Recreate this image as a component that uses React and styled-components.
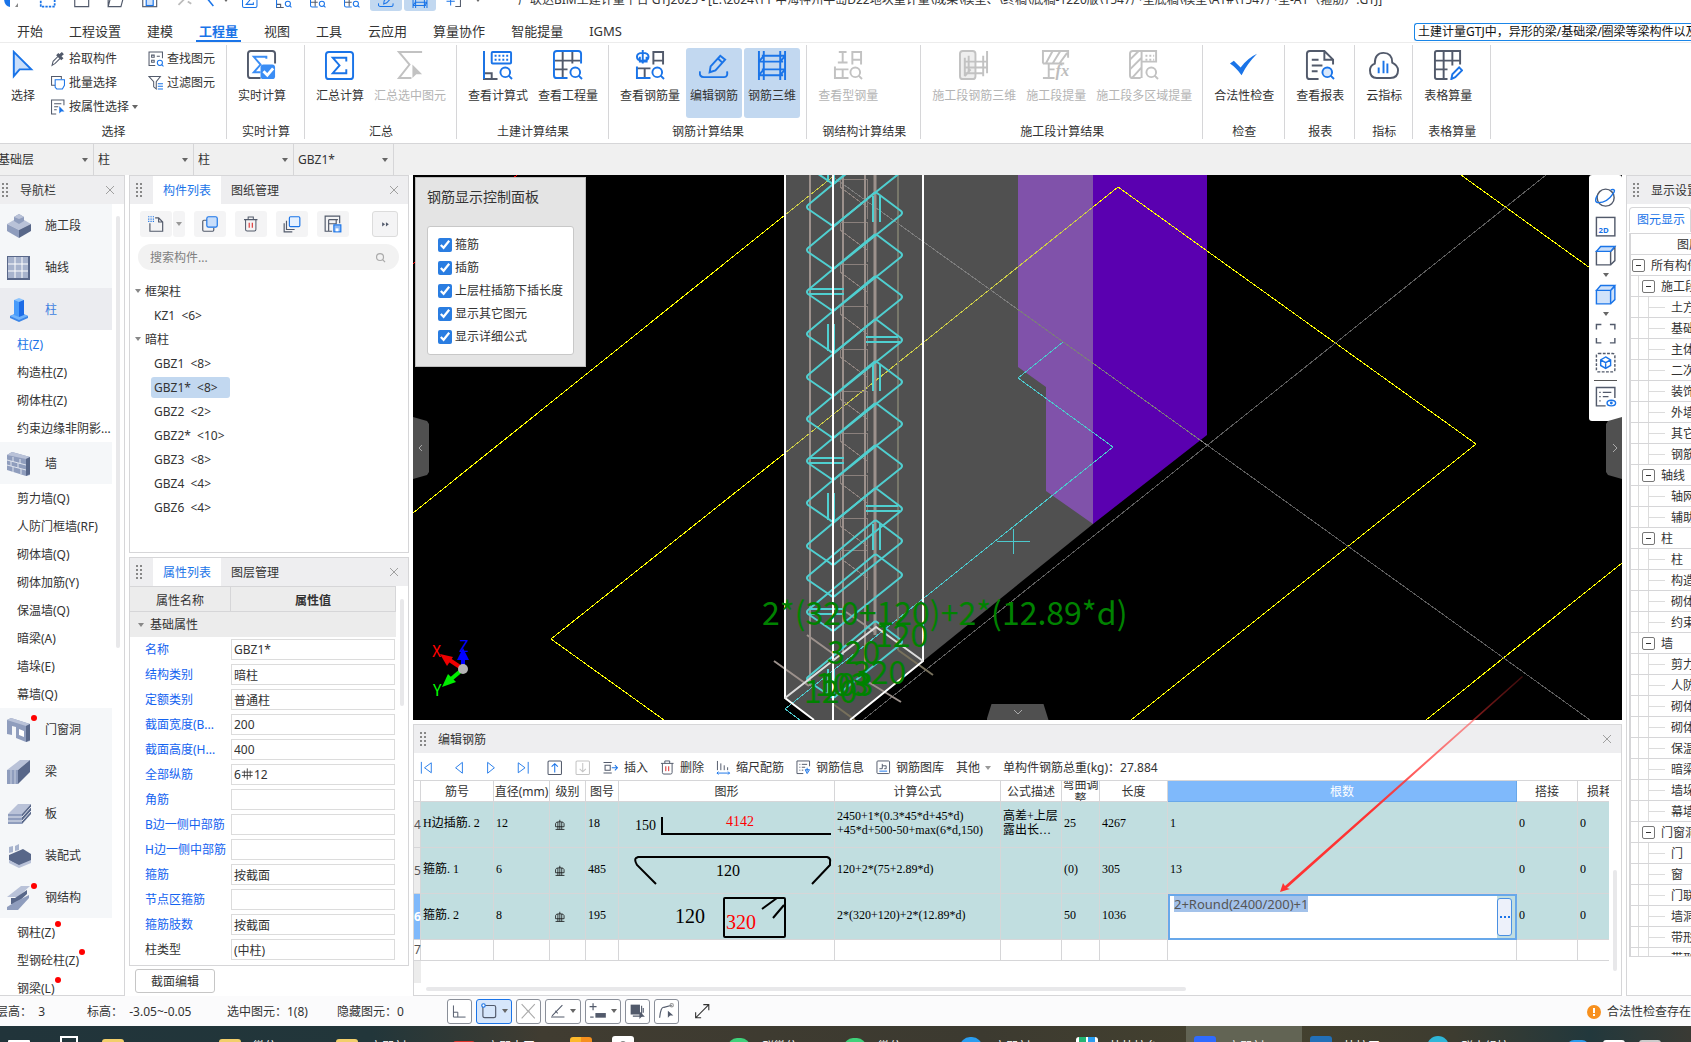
import React from "react";
import styled, { createGlobalStyle, css } from "styled-components";

const BLUE = "#1a74e8";
const DARK = "#525a6b";
const LINE = "#d6d6d8";

// Styles
const GlobalStyle = createGlobalStyle`
  * {
    box-sizing: border-box;
  }

  body {
    margin: 0;
    overflow: hidden;
    background: #fff;
  }

  body, button, input, select, table {
    font-family: "Noto Sans", "Noto Sans CJK SC", sans-serif;
    font-size: 12px;
    line-height: 16px;
    color: #333;
  }

  button {
    border: 0;
    padding: 0;
    background: none;
  }

  svg {
    display: block;
    flex: none;
  }
`;

const Window = styled.div`
  display: flex;
  flex-direction: column;
  height: 100vh;
  overflow: hidden;
`;

const TitleBar = styled.header`
  display: flex;
  align-items: flex-end;
  height: 20px;
  overflow: hidden;

  .inner {
    display: flex;
    align-items: center;
    height: 40px;
    white-space: nowrap;
  }

  .title {
    margin: 0 0 0 32px;
    font-size: 12px;
    font-weight: 400;
  }
`;

const QuickButton = styled.button`
  display: flex;
  align-items: center;
  justify-content: center;
  width: ${(p) => p.$w || 32}px;
  height: 22px;
  margin-right: 2px;
  border-radius: 3px;
  background: ${(p) => (p.$on ? "#c2d8f0" : "none")};
`;

const TabBar = styled.nav`
  display: flex;
  height: 23px;
  padding-left: 4px;
  border-bottom: 1px solid #ececec;

  a {
    position: relative;
    padding: 1px 13px 0;
    font-size: 13px;
    line-height: 20px;
    color: #333;
    text-decoration: none;
    white-space: nowrap;
  }

  a.active {
    color: ${BLUE};
    font-weight: 700;
  }

  a.active::after {
    content: "";
    position: absolute;
    left: 10px;
    right: 10px;
    bottom: 0;
    height: 2px;
    background: ${BLUE};
  }
`;

const Notice = styled.div`
  width: 277px;
  height: 18px;
  margin: 3px 0 0 auto;
  padding-left: 3px;
  overflow: hidden;
  border: 1px solid #1a86e8;
  border-right: 0;
  border-radius: 3px 0 0 3px;
  color: #111;
  white-space: nowrap;
`;

const Ribbon = styled.div`
  display: flex;
  height: 101px;
  padding-top: 2px;
  border-bottom: 1px solid ${LINE};
`;

const Group = styled.section`
  display: flex;
  flex-direction: column;
  height: 94px;
  border-right: 1px solid ${LINE};

  .buttons {
    display: flex;
    gap: 2px;
    height: 77px;
    padding: 3px 6px 4px ${(p) => (p.$first ? 4 : 7)}px;
  }

  h2 {
    margin: 2px 0 0;
    padding: 0 14px 0 15px;
    font-size: 12px;
    line-height: 15px;
    font-weight: 400;
    text-align: center;
    white-space: nowrap;
  }
`;

const BigButton = styled.button`
  display: flex;
  flex-direction: column;
  align-items: center;
  gap: 8px;
  padding: 2px 4px;
  border-radius: 3px;
  white-space: nowrap;
  color: ${(p) => (p.disabled ? "#b4b4b4" : "#333")};
  background: ${(p) => (p.$on ? "#c2d8f0" : "none")};
`;

const SmallColumn = styled.div`
  display: flex;
  flex-direction: column;
  gap: 8px;
  width: ${(p) => p.$w}px;
  padding: 3px 0 0 6px;

  button {
    display: flex;
    align-items: center;
    gap: 3px;
    height: 16px;
    white-space: nowrap;
  }
`;

const SelectorBar = styled.div`
  display: flex;
  height: 31px;
  background: #f0f0f0;

  .first {
    margin-left: -6px;
  }
`;

const Picker = styled.label`
  display: flex;
  align-items: center;
  width: 100px;
  padding: 0 5px 0 4px;
  border-right: 1px solid ${LINE};

  select {
    flex: 1;
    min-width: 0;
    padding: 0;
    border: 0;
    background: none;
    appearance: none;
  }
`;

const Body = styled.main`
  display: flex;
  flex: 1;
  min-height: 0;
  gap: 4px;
`;

const PanelHead = styled.div`
  display: flex;
  align-items: center;
  flex: none;
  height: 28px;
  padding: 0 ${(p) => p.$right || 9}px 0 ${(p) => p.$left || 6}px;
  background: #eeeef0;
  white-space: nowrap;

  h3 {
    margin: 0 0 0 12px;
    padding-top: 2px;
    font-size: 12px;
    font-weight: 400;
  }

  .tabs {
    display: flex;
    margin-left: 11px;
  }

  .close {
    margin-left: auto;
  }
`;

const Tab = styled.button`
  height: 28px;
  padding: 2px 10px 0;
  white-space: nowrap;
  color: ${(p) => (p.$on ? BLUE : "#333")};
  background: ${(p) => (p.$on ? "#fff" : "none")};
`;

const NavPanel = styled.aside`
  display: flex;
  flex-direction: column;
  flex: none;
  width: 125px;
  border: solid ${LINE};
  border-width: 1px 1px 1px 0;

  .scroll {
    display: flex;
    flex: 1;
    min-height: 0;
    overflow: hidden;
  }

  .list {
    width: 112px;
  }
`;

const ScrollBar = styled.div`
  flex: none;
  width: 4px;
  height: ${(p) => p.$size}px;
  margin: ${(p) => p.$top}px 4px 0;
  border-radius: 2px;
  background: #e8e8ea;
`;

const NavGroup = styled.a`
  display: flex;
  align-items: center;
  gap: 14px;
  height: 42px;
  padding: 2px 0 0 7px;
  text-decoration: none;
  color: ${(p) => (p.$on ? "#3f7fe0" : "#333")};
  background: ${(p) => (p.$on ? "#ebecf0" : "#f5f7f9")};
`;

const NavItem = styled.a`
  display: block;
  height: 28px;
  padding-left: 17px;
  line-height: 30px;
  text-decoration: none;
  white-space: nowrap;
  color: ${(p) => (p.$on ? BLUE : "#333")};
`;

const Marked = styled.span`
  position: relative;

  ${(p) =>
    p.$dot &&
    css`
      &::after {
        content: "";
        position: absolute;
        top: -3px;
        right: -6px;
        width: 6px;
        height: 6px;
        border-radius: 50%;
        background: #f00;
      }
    `}
`;

const SideColumn = styled.div`
  display: flex;
  flex-direction: column;
  flex: none;
  width: 280px;
`;

const Panel = styled.section`
  display: flex;
  flex-direction: column;
  overflow: hidden;
  border: 1px solid ${LINE};
`;

const ComponentPanel = styled(Panel)`
  height: 378px;
  margin-bottom: 4px;
`;

const ListTools = styled.div`
  display: flex;
  gap: 9px;
  padding: 7px 10px;

  button {
    display: flex;
    align-items: center;
    justify-content: center;
    width: 32px;
    height: 26px;
    border-radius: 3px;
    background: #f4f4f5;
  }

  .split {
    display: flex;
    gap: 1px;
  }

  .caret {
    width: 12px;
  }

  .more {
    width: 26px;
    margin-left: auto;
    border: 1px solid #dcdcdc;
  }
`;

const SearchBox = styled.label`
  display: flex;
  align-items: center;
  height: 26px;
  margin: 0 9px 0 8px;
  padding: 1px 12px 0;
  border-radius: 13px;
  background: #f2f2f2;

  input {
    flex: 1;
    min-width: 0;
    padding: 0;
    border: 0;
    background: none;
  }

  input::placeholder {
    color: #808080;
  }
`;

const Tree = styled.ul`
  margin: 9px 0 0;
  padding: 0;
  list-style: none;

  li {
    display: flex;
    align-items: center;
    gap: 4px;
    height: 24px;
    padding-left: 5px;
  }

  li.leaf {
    padding-left: 21px;
  }

  span {
    padding: 3px 3px 2px;
    border-radius: 3px;
    white-space: pre;
  }

  .group {
    padding-left: 0;
  }

  .selected {
    width: 79px;
    background: #c2d8f0;
  }
`;

const PropertyPanel = styled(Panel)`
  flex: 1;
  min-height: 0;

  .scroll {
    display: flex;
    flex: 1;
    min-height: 0;
  }
`;

const PropertyTable = styled.table`
  flex: none;
  width: 266px;
  border-spacing: 0;
  table-layout: fixed;
  height: max-content;

  col.name {
    width: 101px;
  }

  th {
    height: 26px;
    padding: 4px 0 0;
    border: solid ${LINE};
    border-width: 1px 1px 1px 0;
    background: #ececec;
  }

  th.name {
    font-weight: 400;
  }

  td {
    height: 25px;
    padding: 0 1px 0 0;
    white-space: nowrap;
  }

  td.section {
    background: #ececec;
  }

  td.section div {
    display: flex;
    align-items: center;
    gap: 6px;
    padding-left: 8px;
  }

  input {
    display: block;
    width: 100%;
    height: 21px;
    padding: 0 2px;
    border: 1px solid #dcdcdc;
  }
`;

const PropName = styled.td`
  color: ${(p) => (p.$plain ? "#333" : "#1463f0")};

  label {
    padding-left: 15px;
  }
`;

const BarField = styled.div`
  display: flex;
  align-items: center;
  height: 21px;
  padding: 0 2px;
  border: 1px solid #dcdcdc;
`;

const SectionButton = styled.button`
  align-self: flex-start;
  width: 80px;
  height: 24px;
  margin: 3px 6px;
  padding-top: 1px;
  border: 1px solid #c6c6c6;
  border-radius: 3px;
  background: #fff;
`;

const Center = styled.div`
  position: relative;
  display: flex;
  flex-direction: column;
  flex: 1;
  min-width: 0;
`;

const Viewport = styled.div`
  position: relative;
  flex: 1;
  min-height: 0;
  margin-bottom: 4px;
  background: #000;
  overflow: hidden;

  > svg {
    width: 100%;
    height: 100%;
  }
`;

const EdgeHandle = styled.button`
  position: absolute;
  display: flex;
  align-items: center;
  justify-content: center;
  background: #505050;

  ${(p) =>
    p.$side === "bottom"
      ? css`
          left: calc(50% - 31px);
          bottom: 0;
          width: 62px;
          height: 16px;
          clip-path: polygon(5px 0, 57px 0, 62px 100%, 0 100%);
        `
      : css`
          ${p.$side}: 0;
          top: 242px;
          width: 16px;
          height: 62px;
          clip-path: ${p.$side === "left"
            ? "polygon(0 0, 14px 4px, 16px 7px, 16px 55px, 14px 58px, 0 62px)"
            : "polygon(16px 0, 2px 4px, 0 7px, 0 55px, 2px 58px, 16px 62px)"};
        `}
`;

const DisplayPanel = styled.div`
  position: absolute;
  top: 2px;
  left: 2px;
  width: 171px;
  padding: 11px;
  border: 1px solid #bdbdbd;
  background: #e4e4e4;

  h3 {
    margin: 0 0 21px;
    font-size: 14px;
    line-height: 16px;
    font-weight: 400;
  }

  div {
    display: flex;
    flex-direction: column;
    gap: 7px;
    height: 129px;
    padding: 10px;
    border: 1px solid #c8c8c8;
    border-radius: 3px;
    background: #fff;
  }

  label {
    display: flex;
    align-items: center;
    gap: 3px;
    white-space: nowrap;
  }

  input {
    width: 14px;
    height: 14px;
    margin: 0;
    accent-color: #2a7de1;
  }
`;

const ViewTools = styled.div`
  position: absolute;
  top: 0;
  right: 0;
  display: flex;
  flex-direction: column;
  align-items: center;
  width: 33px;
  height: 246px;
  padding-top: 12px;
  border-radius: 3px;
  background: #fff;

  button {
    height: 22px;
    margin-bottom: 7px;
  }

  .caret {
    height: 6px;
    margin: -2px 0 6px;
  }

  hr {
    width: 23px;
    margin: -1px 0 5px;
    border: 0;
    border-top: 1px solid #555;
  }
`;

const EditPanel = styled(Panel)`
  flex: none;
  height: 272px;

  .grid {
    display: flex;
  }

  .frame {
    flex: 1;
    min-width: 0;
    overflow: hidden;
  }

  .gutter {
    width: 7px;
    height: 22px;
    background: #ececec;
  }
`;

const EditTools = styled.div`
  display: flex;
  align-items: center;
  height: 28px;
  padding: 2px 0 0 5px;
  border-bottom: 1px solid ${LINE};
  white-space: nowrap;

  button {
    display: flex;
    align-items: center;
    gap: 5px;
    margin-right: 12px;
  }

  .step {
    width: 16px;
    justify-content: center;
    margin-right: 16px;
  }

  .move {
    margin-right: 12px;
  }
`;

const RebarTable = styled.table`
  width: 100%;
  border-spacing: 0;
  table-layout: fixed;

  th {
    height: 21px;
    padding: 0;
    border: solid ${LINE};
    border-width: 0 1px 1px 0;
    font-weight: 400;
    white-space: nowrap;
  }

  th:last-child {
    border-right: 0;
  }

  th div {
    display: flex;
    align-items: center;
    justify-content: center;
    height: 20px;
    padding-top: 1px;
    overflow: hidden;
  }

  th:last-child div {
    justify-content: flex-start;
    padding-left: 9px;
  }

  th .wrapped {
    line-height: 14px;
    white-space: normal;
  }

  th.current {
    border-color: #68a8ea;
    background: #7fb9fb;
    color: #fff;
  }

  td {
    height: 46px;
    padding: 0 2px 4px;
    border: solid ${LINE};
    border-width: 0 1px 1px 0;
    background: #c1dee0;
    font-family: "Liberation Serif", "Noto Sans CJK SC", serif;
    line-height: 14px;
    color: #000;
    white-space: pre;
  }

  .grade {
    padding: 0 0 0 4px;
  }

  .figure {
    padding: 0;
  }

  .editing {
    padding: 0;
    border: 0;
  }

  td:last-child {
    border-right: 0;
  }

  tr.empty td {
    height: 21px;
    background: #fff;
  }
`;

const RowHead = styled.td`
  && {
    padding: 0;
    font-family: "Noto Sans", sans-serif;
    text-align: center;
    color: ${(p) => (p.$on ? "#fff" : "#555")};
    font-weight: ${(p) => (p.$on ? 700 : 400)};
    background: ${(p) => (p.$on ? "#7fb9fb" : "#ececec")};
  }
`;

const Editor = styled.div`
  display: flex;
  align-items: flex-start;
  height: 46px;
  border: 2px solid #68a8ea;
  background: #fff;

  input {
    field-sizing: content;
    height: 16px;
    margin-left: 4px;
    padding: 0;
    border: 0;
    font-size: 13px;
    line-height: 15px;
    background: #a3c2ea;
    color: #555;
  }

  span {
    margin-left: auto;
    padding: 2px 3px 2px 0;
    background: #c1dee0;
  }

  button {
    display: flex;
    align-items: center;
    justify-content: center;
    width: 15px;
    height: 38px;
    border: 1px solid #4a90e2;
    border-radius: 3px;
    background: #edf1fa;
  }
`;

const HScroll = styled.div`
  width: 63%;
  height: 4px;
  margin: 4px 12px;
  border-radius: 2px;
  background: #e8e8ea;
`;

const Arrow = styled.svg`
  position: absolute;
  inset: 0;
  width: 100%;
  height: 100%;
  pointer-events: none;
`;

const LayerPanel = styled.aside`
  flex: none;
  width: 65px;
  overflow: hidden;
  border: solid ${LINE};
  border-width: 1px 0 1px 1px;
  white-space: nowrap;

  .tab {
    display: block;
    width: 62px;
    height: 25px;
    margin: 3px 0 1px 2px;
    padding-left: 7px;
    border: 1px solid ${LINE};
    border-bottom: 0;
    border-radius: 4px 4px 0 0;
    text-align: left;
    color: ${BLUE};
  }

  .tree {
    height: 724px;
    margin-left: 2px;
    overflow: hidden;
    border: solid ${LINE};
    border-width: 1px 0 1px 2px;
  }

  .title {
    height: 21px;
    padding-left: 46px;
    line-height: 21px;
    border-bottom: 1px solid ${LINE};
  }
`;

const LayerRow = styled.div`
  display: flex;
  align-items: stretch;
  height: 21px;
  border-bottom: 1px solid ${LINE};
  line-height: 21px;

  .rail {
    flex: none;
    display: ${(p) => (p.$level === 0 ? "none" : "block")};
    width: ${(p) => (p.$level === 2 ? 18 : 8)}px;
    margin-right: ${(p) => (p.$level === 1 ? 3 : 0)}px;
    border-right: 1px solid #dcdcdc;
    background: ${(p) =>
      p.$level === 2
        ? "linear-gradient(90deg, transparent 7px, #dcdcdc 7px, #dcdcdc 8px, transparent 8px)"
        : "none"};
  }

  .twig {
    flex: none;
    align-self: center;
    width: 16px;
    height: 1px;
    margin-right: 6px;
    background: #dcdcdc;
  }

  button {
    flex: none;
    align-self: center;
    width: 13px;
    height: 13px;
    margin: 0 6px 0 ${(p) => (p.$level === 0 ? 1 : 0)}px;
    border: 1px solid #777;
    border-radius: 2px;
    background: #fff;
  }

  button::before {
    content: "";
    display: block;
    width: 5px;
    height: 1px;
    margin: auto;
    background: #333;
  }
`;

const StatusBar = styled.footer`
  display: flex;
  align-items: center;
  flex: none;
  height: 30px;
  overflow: hidden;
  background: #fbfbfc;
  white-space: nowrap;

  .readings {
    display: flex;
    width: 451px;
    margin-left: -4px;
    padding-top: 1px;
  }

  .readings span {
    width: 140px;
  }

  .readings span:first-child {
    width: 91px;
  }

  .readings span:last-child {
    width: 70px;
  }

  .readings span:nth-child(3) {
    width: 110px;
  }

  .expand {
    padding-left: 11px;
  }

  .check {
    display: flex;
    align-items: center;
    gap: 6px;
    width: 104px;
    margin-left: auto;
    padding-top: 1px;
  }
`;

const StatusButton = styled.button`
  display: flex;
  align-items: center;
  justify-content: center;
  gap: 4px;
  width: ${(p) => (p.$wide ? 36 : 25)}px;
  height: 25px;
  margin-right: 4px;
  border: 1px solid ${(p) => (p.$on ? BLUE : "#8a8f99")};
  border-radius: 3px;
  background: ${(p) => (p.$on ? "#d6e6fb" : "#fff")};
`;

const TaskBar = styled.div`
  display: flex;
  flex: none;
  height: 16px;
  overflow: hidden;
  background: linear-gradient(90deg, #21343a 0, #22363a 22%, #403c31 32%, #3c3a30 58%, #45422f 74%, #3d3c30 86%, #22383c 94%, #3a3a34 100%);
`;

const Task = styled.div`
  display: flex;
  align-items: center;
  flex: none;
  gap: 12px;
  width: ${(p) => p.$w}px;
  height: 42px;
  padding-left: 8px;
  color: #fff;
  white-space: nowrap;
  background: ${(p) => (p.$on ? "#626454" : "none")};
`;

const TaskIcon = styled.span`
  flex: none;
  width: 22px;
  height: ${(p) => p.$h || 20}px;
  border-radius: ${(p) => p.$r || 3}px;
  background: ${(p) => p.$c};
`;

// Icons
const s = (stroke, w = 2) => ({ fill: "none", stroke, strokeWidth: w });

const magnifier = (c) => (
  <g {...s(c)}>
    <circle cx="23" cy="23" r="5" />
    <path d="M26.5 26.5L30 30" />
  </g>
);

const icons = {
  cursor: <path d="M6 2V27L12 20H24Z" fill="#c9defa" stroke={BLUE} strokeWidth="2" />,
  realtime: (
    <>
      <path d="M14 29H4Q1 29 1 26V4Q1 1 4 1H26Q29 1 29 4V14" {...s(DARK)} />
      <path d="M20 9V7H7L14 15L7 23H14" {...s("#3a8df5")} />
      <rect x="14" y="15" width="15" height="15" rx="3" fill="#3a8df5" />
      <path d="M17 22L21 26L27 19" {...s("#fff", 3)} />
    </>
  ),
  sum: (
    <>
      <rect x="1" y="2" width="28" height="28" rx="3" {...s(BLUE)} />
      <path d="M22 12V8H8L15 16L8 24H22V20" {...s(BLUE)} />
    </>
  ),
  sumPick: (
    <>
      <path d="M28 2H4L15 15L4 29H17" {...s("#c2c2c2")} />
      <path d="M18 15V29L22 25H28Z" fill="#c2c2c2" />
    </>
  ),
  formula: (
    <>
      <path d="M1 1V30H15M1 24H9V30" {...s(DARK)} />
      <path d="M1 1V30" {...s(BLUE)} />
      <rect x="9" y="2" width="20" height="12" rx="1" {...s(BLUE)} />
      <path d="M12 6H27M12 10H27" {...s(BLUE)} strokeDasharray="2 2" />
      {magnifier(BLUE)}
    </>
  ),
  quantity: (
    <>
      <path d="M29 14V4Q29 1 26 1H4Q1 1 1 4V26Q1 29 4 29H15" {...s(BLUE)} />
      <path d="M2 11H28M2 20H15M10 2V28M20 2V14" {...s(DARK)} />
      {magnifier(BLUE)}
    </>
  ),
  barQuantity: (
    <>
      <path d="M8 0V14M2 7Q2 3 8 3Q14 3 14 7Q14 11 8 11Q2 11 2 7M5 7V12H12V7" {...s(BLUE)} />
      <path d="M19 15V2H29V15M19 11H29M2 19H16M10 19V29" {...s(DARK)} />
      <path d="M2 17V29H16" {...s(BLUE)} />
      {magnifier(BLUE)}
    </>
  ),
  editBar: (
    <>
      <path d="M1 22Q0 28 5 28H26Q30 28 29 22" {...s(BLUE)} />
      <path d="M11 23L12 17L22 6L27 10L17 21Z M20 9L24 13" {...s(BLUE)} />
    </>
  ),
  bar3d: <path d="M2 1V31M7 1V31M24 1V31M29 1V31M5 6H28M2 12H27M5 20H28M2 26H27M2 12L7 6M24 12L29 6M2 26L7 20M24 26L29 20" {...s(BLUE)} />,
  addFrame: (
    <>
      <path d="M12 5H28V28H18" {...s(DARK)} />
      <path d="M9 10V26M1 18H17" {...s(BLUE)} />
    </>
  ),
  steel: (
    <>
      <path d="M6 2H14M10 2V13M5 13H15M20 15V2H29V15M20 10H29M2 17V29H16M2 20H16M10 20V29" {...s("#c2c2c2")} />
      {magnifier("#c2c2c2")}
    </>
  ),
  stage3d: (
    <>
      <rect x="1" y="1" width="16" height="29" rx="3" fill="#eee" stroke="#c2c2c2" strokeWidth="2" />
      <path d="M6 8V27M10 6V24M25 6V27M29 1V24M6 12H29M6 18H29M6 24H26M6 27L12 20" {...s("#c2c2c2")} />
    </>
  ),
  stageSum: (
    <>
      <path d="M2 14V1H28V8M2 14H24M5 14L12 1M12 14L20 1M19 14L27 3M8 14V29M2 29H14M8 20H14" {...s("#c2c2c2")} />
      <text x="15" y="27" fontFamily="Liberation Serif, serif" fontSize="17" fontStyle="italic" fontWeight="700" fill="#bdbdbd">fx</text>
    </>
  ),
  stageArea: (
    <>
      <path d="M12 29H4Q1 29 1 26V4Q1 1 4 1H28V12H14M13 1V29M1 10L10 1M1 20L13 8M3 29L13 18" {...s("#c2c2c2")} />
      <path d="M17 6H26M17 10H26" {...s("#c2c2c2")} strokeDasharray="2 2" />
      {magnifier("#c2c2c2")}
    </>
  ),
  tick: <path d="M1 14L5 11L12 18Q20 8 29 4Q19 14 13 26Q7 18 1 14Z" fill={BLUE} />,
  report: (
    <>
      <path d="M14 30H5Q2 30 2 27V4Q2 1 5 1H20L29 10V15M20 1V10H28M7 10H14M7 16H18M7 22H13" {...s(DARK)} />
      <circle cx="23" cy="23" r="5" fill="#d9e8fc" />
      {magnifier(BLUE)}
    </>
  ),
  cloud: (
    <>
      <path d="M8 29Q1 29 1 21Q1 16 6 14Q6 3 15 3Q24 3 24 13Q30 16 30 21Q30 29 22 29Z" {...s(DARK)} />
      <path d="M10 18V24M15 11V24M19 14V24" {...s(BLUE)} />
    </>
  ),
  sheet: (
    <>
      <path d="M15 30H4Q2 30 2 28V3Q2 1 4 1H28V15M2 11H29M2 20H15M11 1V30M20 1V16" {...s(DARK)} />
      <path d="M19 30L20 25L27 18L30 21L23 28Z" {...s(BLUE)} />
    </>
  ),
  pipette: (
    <>
      <path d="M4 28L6 20L16 10L20 14L10 24Z" {...s(DARK)} />
      <path d="M14 6L24 16M18 10L25 4" {...s(DARK, 6)} />
    </>
  ),
  batch: (
    <>
      <path d="M10 20H3V3H22V8" {...s(DARK)} />
      <path d="M10 9H28V20L24 27H13L10 24Z" {...s(BLUE)} />
    </>
  ),
  byProp: (
    <>
      <path d="M12 29H3V2H27V12M8 9H22M8 15H16M8 21H13" {...s(DARK)} />
      <path d="M18 14V28L22 24H28Z" fill={BLUE} />
    </>
  ),
  find: (
    <>
      <path d="M14 28H2V2H28V14M7 8H12V12H7ZM7 18H12V22H7ZM17 10H23" {...s(DARK)} />
      {magnifier(BLUE)}
    </>
  ),
  filter: (
    <>
      <path d="M2 3H24L16 13V27L11 23V13Z" {...s(DARK)} />
      <path d="M19 17H29M19 22H29M19 27H29" {...s(BLUE)} />
    </>
  ),
  select: <rect x="3" y="3" width="24" height="24" {...s(BLUE, 3)} strokeDasharray="4 2" />,
  page: <path d="M3 2H20L27 9V27H3Z" {...s(DARK)} />,
  open: <path d="M2 27L7 8H29L24 27ZM2 27V3H12" {...s(DARK)} />,
  save: (
    <>
      <rect x="3" y="3" width="24" height="24" {...s(DARK)} />
      <rect x="9" y="10" width="12" height="15" fill="#d0e2fa" stroke={BLUE} strokeWidth="2" />
    </>
  ),
  undo: <path d="M24 6L6 24M22 18L28 22" {...s("#bbb", 3)} />,
  redo: <path d="M8 10L22 27" {...s(BLUE, 3)} />,
  newDoc: (
    <>
      <path d="M14 5H20L27 12V28H5V14M20 5V12H27" {...s(DARK)} />
      <path d="M2 3H12M2 7H12M2 11H12" {...s(BLUE, 2)} strokeDasharray="2 2" />
    </>
  ),
  copy: (
    <>
      <path d="M11 9H5Q3 9 3 11V26Q3 28 5 28H20Q22 28 22 26V22" {...s(DARK)} />
      <rect x="10" y="3" width="18" height="18" rx="3" fill="#c9defa" stroke={BLUE} strokeWidth="2" />
    </>
  ),
  trash: (
    <>
      <path d="M2 7H28M10 7V2H20V7M5 7V26Q5 29 8 29H22Q25 29 25 26V7" {...s(DARK)} />
      <path d="M12 13V23M18 13V23" {...s("#d22")} />
    </>
  ),
  layers: (
    <>
      <path d="M6 10V25H20M2 14V29H16" {...s(DARK)} />
      <rect x="11" y="3" width="18" height="17" rx="2" fill="#e6f1ff" stroke={BLUE} strokeWidth="2" />
    </>
  ),
  saveTo: (
    <>
      <path d="M14 28H2V2H27V14M8 8V28M8 15H22M21 8V15M8 8H24" {...s(DARK)} />
      <rect x="17" y="17" width="12" height="12" fill="#8ab8f5" stroke={BLUE} strokeWidth="2" />
      <rect x="20" y="23" width="5" height="5" fill="#fff" />
    </>
  ),
  more: <path d="M4 8L14 15L4 22ZM17 8L27 15L17 22Z" fill={DARK} />,
  search: (
    <g {...s("#aaa", 3)}>
      <circle cx="13" cy="13" r="9" />
      <path d="M20 20L26 26" />
    </g>
  ),
  first: <path d="M3 2V28M25 4V26L10 15Z" {...s(BLUE)} />,
  prev: <path d="M23 3V27L8 15Z" {...s(BLUE)} />,
  next: <path d="M8 3V27L23 15Z" {...s(BLUE)} />,
  last: <path d="M27 2V28M5 4V26L20 15Z" {...s(BLUE)} />,
  up: (
    <>
      <rect x="2" y="2" width="26" height="26" rx="2" {...s(DARK)} />
      <path d="M15 24V8M9 13L15 7L21 13" {...s(BLUE)} />
    </>
  ),
  down: (
    <>
      <rect x="2" y="2" width="26" height="26" rx="2" {...s("#c4c4c4")} />
      <path d="M15 6V22M9 17L15 23L21 17" {...s("#c4c4c4")} />
    </>
  ),
  insert: (
    <>
      <path d="M1 5H17M1 25H17M4 10H14V20H4Z" {...s(DARK)} />
      <path d="M17 15H28M23 10L28 15L23 20" {...s(BLUE)} />
    </>
  ),
  scale: (
    <>
      <path d="M3 2V21M10 7V21M17 11V21M24 15V21" {...s(DARK)} />
      <path d="M2 27H28M5 24L2 27L5 30M25 24L28 27L25 30" {...s(BLUE)} />
    </>
  ),
  info: (
    <>
      <path d="M15 28H2V2H28V13M7 9H9M12 9H23M7 15H9M12 15H19M7 21H9M12 21H15" {...s(DARK)} />
      <path d="M23 16V24M19 20H28L23 28Z" {...s(BLUE)} />
    </>
  ),
  library: (
    <>
      <rect x="2" y="2" width="26" height="26" rx="2" {...s(DARK)} />
      <path d="M7 18H13V8M13 12H21V18H17" {...s(DARK)} />
      <path d="M7 23H23" {...s(BLUE)} />
    </>
  ),
  orbit: (
    <>
      <circle cx="15" cy="15" r="12" {...s(DARK)} />
      <path d="M3 12Q-2 22 5 22Q17 22 25 10Q31 2 22 4" {...s(BLUE)} />
    </>
  ),
  view2d: (
    <>
      <rect x="2" y="2" width="26" height="26" {...s(DARK)} />
      <text x="5" y="24" fontSize="11" fontWeight="700" fontFamily="Noto Sans, sans-serif" fill={BLUE}>2D</text>
    </>
  ),
  cube: (
    <>
      <path d="M2 9H22V28H2ZM22 9L28 3V22L22 28" {...s(DARK)} />
      <path d="M2 9L8 2H28L22 9Z" fill="#c9defa" stroke={BLUE} strokeWidth="2" />
    </>
  ),
  cubeFull: <path d="M2 9H22V28H2ZM22 9L28 3V22L22 28M2 9L8 2H28L22 9Z" fill="#d0e2fa" stroke={BLUE} strokeWidth="2" />,
  corners: <path d="M2 9V2H9M21 2H28V9M28 21V28H21M9 28H2V21" {...s(DARK)} />,
  isolate: (
    <>
      <rect x="2" y="2" width="26" height="26" rx="3" {...s(DARK)} strokeDasharray="4 2" />
      <path d="M15 7L22 11V19L15 23L8 19V11ZM8 11L15 15L22 11M15 15V23" {...s(BLUE)} />
    </>
  ),
  listEye: (
    <>
      <path d="M15 28H2V2H28V17M6 9H8M11 9H23M6 15H8M11 15H19M6 21H8" {...s(DARK)} />
      <ellipse cx="23" cy="24" rx="6" ry="4" {...s(BLUE)} />
      <circle cx="23" cy="24" r="2" fill={BLUE} />
    </>
  ),
  ortho: <path d="M3 3V27H28M3 17H12V27" {...s(DARK)} />,
  snap: (
    <>
      <rect x="5" y="6" width="22" height="21" rx="3" {...s(DARK)} />
      <circle cx="6" cy="6" r="3" fill="#fff" stroke={BLUE} strokeWidth="2" />
    </>
  ),
  cross: <path d="M3 2L27 28M27 2L3 28M12 13L18 17" {...s("#aaa")} />,
  angle: <path d="M2 27H28M4 25L24 4M10 15L15 20" {...s(DARK)} />,
  plus: (
    <>
      <path d="M7 2V14M1 8H13" {...s(DARK)} />
      <path d="M11 19H29V27H11Z" fill={DARK} />
      <path d="M2 26H8" {...s(DARK)} />
    </>
  ),
  block: (
    <>
      <rect x="3" y="3" width="17" height="18" fill={DARK} />
      <path d="M23 5V24H7M26 9V18" {...s(DARK)} />
      <path d="M19 15V29L23 25H29Z" fill={DARK} />
    </>
  ),
  path: (
    <>
      <path d="M3 27Q5 6 11 8L25 4" {...s(DARK)} />
      <path d="M18 14V27L22 23H28Z" fill={DARK} />
      <circle cx="25" cy="4" r="3" {...s("#999")} />
    </>
  ),
  expand: <path d="M3 27L27 3M17 3H27V13M3 17V27H13" {...s("#333")} />,
  // rebar grade mark
  grade: <path d="M15 2V27M4 12Q4 7 15 7Q26 7 26 12V20H4ZM10 8V27M20 8V27M4 27H27" {...s("#111")} />,
  gradeHash: <path d="M15 1V28M8 6V23M22 6V23M2 10H28M2 18H28" {...s("#333")} />,
};

const Icon = ({ name, size = 30 }) => (
  <svg width={size} height={size} viewBox="0 0 31 31" aria-hidden="true">
    {icons[name]}
  </svg>
);

const Caret = ({ color = "#666" }) => (
  <svg width="6" height="4" viewBox="0 0 6 4" aria-hidden="true">
    <path d="M0 0H6L3 4Z" fill={color} />
  </svg>
);

const Close = () => (
  <button className="close" aria-label="关闭">
    <svg width="10" height="10" viewBox="0 0 10 10">
      <path d="M1 1L9 9M9 1L1 9" {...s("#a0a0a0", 1)} />
    </svg>
  </button>
);

const Grip = () => (
  <svg width="6" height="14" viewBox="0 0 6 14" aria-hidden="true">
    <path d="M1 0V14M5 0V14" {...s("#888")} strokeDasharray="2 2" />
  </svg>
);

// three tone solids used by the navigation list
const solid = { top: "#b9c2d8", front: "#8f9dbd", side: "#586789" };

const navIcons = {
  施工段: (
    <>
      <path d="M0 10L12 3L24 10L12 16Z" fill={solid.top} />
      <path d="M0 10L12 16V24L0 17Z" fill={solid.front} />
      <path d="M24 10L12 16V24L24 17Z" fill={solid.side} />
      <path d="M7 3L12 0L17 3V7L12 10L7 7Z" fill={solid.front} />
      <path d="M7 3L12 0L17 3L12 5Z" fill={solid.top} />
    </>
  ),
  轴线: (
    <>
      <rect width="23" height="24" fill={solid.side} />
      <rect x="1" y="1" width="20" height="21" fill="#a7b3cd" />
      <path d="M8 1V22M15 1V22M1 8H21M1 15H21" {...s("#fff", 1)} />
    </>
  ),
  柱: (
    <>
      <path d="M3 18L12 14L21 18V20L12 24L3 20Z" fill="#3c86e8" />
      <path d="M3 18L12 14L21 18L12 22Z" fill="#6fb2fb" />
      <path d="M7 2H12V19L7 17Z" fill="#479bfb" />
      <path d="M12 2H17V17L12 19Z" fill="#1c6be6" />
      <path d="M7 2L12 0L17 2L12 4Z" fill="#8cc4fd" />
    </>
  ),
  墙: (
    <>
      <path d="M0 3L5 0L23 5V23L19 24L0 18Z" fill={solid.front} />
      <path d="M0 3L5 0L23 5L19 7Z" fill={solid.top} />
      <path d="M19 7L23 5V22L19 24Z" fill={solid.side} />
      <path d="M0 8L19 13M0 13L19 18M6 5V10M13 7V12M4 9V14M11 11V16M6 15V20M14 17V22" {...s("#dfe4ee", 1)} />
    </>
  ),
  门窗洞: (
    <>
      <path d="M0 2L4 0L23 6V23L19 24L9 20V9L5 8V17L0 16Z" fill={solid.front} />
      <path d="M0 2L4 0L23 6L19 8Z" fill={solid.top} />
      <path d="M19 8L23 6V22L19 24Z" fill={solid.side} />
      <path d="M12 11L17 13V19L12 17Z" fill="#fff" />
    </>
  ),
  梁: (
    <>
      <path d="M0 10L13 0H23L11 10Z" fill={solid.top} />
      <path d="M0 10H11V24H0Z" fill={solid.front} />
      <path d="M11 10L23 0V12L11 24Z" fill={solid.side} />
      <path d="M4 10V24M8 10V24" {...s("#c7cfe0", 1)} />
    </>
  ),
  板: (
    <>
      <path d="M1 12L11 2H24L15 12Z" fill={solid.top} />
      <path d="M1 12H15V22H1Z" fill={solid.front} />
      <path d="M15 12L24 2V12L15 22Z" fill={solid.side} />
      <path d="M1 15H15L24 5M1 19H15L24 9" {...s("#e5e9f1", 1)} />
    </>
  ),
  装配式: (
    <>
      <path d="M2 11L16 5L24 10V18L12 22L2 16Z" fill={solid.side} />
      <path d="M2 16L12 21L24 16V19L12 24L2 19Z" fill={solid.top} />
      <path d="M2 3L6 2V8L2 9ZM8 2L12 0V6L8 7Z" fill="#a7b3cd" />
    </>
  ),
  钢结构: (
    <>
      <path d="M0 11L14 0H23L11 11Z" fill={solid.top} />
      <path d="M4 12H8L20 4V8L9 18H4Z" fill={solid.side} />
      <path d="M0 21L8 16L22 9V12L11 24H0Z" fill={solid.front} />
    </>
  ),
};

// Data
const tabs = ["开始", "工程设置", "建模", "工程量", "视图", "工具", "云应用", "算量协作", "智能提量", "IGMS"];

const groups = [
  { title: "实时计算", buttons: [["realtime", "实时计算"]] },
  { title: "汇总", buttons: [["sum", "汇总计算"], ["sumPick", "汇总选中图元", "off"]] },
  { title: "土建计算结果", buttons: [["formula", "查看计算式"], ["quantity", "查看工程量"]] },
  { title: "钢筋计算结果", buttons: [["barQuantity", "查看钢筋量"], ["editBar", "编辑钢筋", "on"], ["bar3d", "钢筋三维", "on"]] },
  { title: "钢结构计算结果", buttons: [["steel", "查看型钢量", "off"]] },
  { title: "施工段计算结果", buttons: [["stage3d", "施工段钢筋三维", "off"], ["stageSum", "施工段提量", "off"], ["stageArea", "施工段多区域提量", "off"]] },
  { title: "检查", buttons: [["tick", "合法性检查"]] },
  { title: "报表", buttons: [["report", "查看报表"]] },
  { title: "指标", buttons: [["cloud", "云指标"]] },
  { title: "表格算量", buttons: [["sheet", "表格算量"]] },
];

const nav = [
  { name: "施工段" },
  { name: "轴线" },
  { name: "柱", on: true, items: ["柱(Z)", "构造柱(Z)", "砌体柱(Z)", "约束边缘非阴影..."] },
  { name: "墙", items: ["剪力墙(Q)", "人防门框墙(RF)", "砌体墙(Q)", "砌体加筋(Y)", "保温墙(Q)", "暗梁(A)", "墙垛(E)", "幕墙(Q)"] },
  { name: "门窗洞", dot: true },
  { name: "梁" },
  { name: "板" },
  { name: "装配式" },
  { name: "钢结构", dot: true, items: ["钢柱(Z)", "型钢砼柱(Z)", "钢梁(L)"], dots: true },
];

const components = [
  { group: "框架柱", items: ["KZ1  <6>"] },
  { group: "暗柱", items: ["GBZ1  <8>", "GBZ1*  <8>", "GBZ2  <2>", "GBZ2*  <10>", "GBZ3  <8>", "GBZ4  <4>", "GBZ6  <4>"] },
];

const properties = [
  ["名称", "GBZ1*"],
  ["结构类别", "暗柱"],
  ["定额类别", "普通柱"],
  ["截面宽度(B...", "200"],
  ["截面高度(H...", "400"],
  ["全部纵筋", null],
  ["角筋", ""],
  ["B边一侧中部筋", ""],
  ["H边一侧中部筋", ""],
  ["箍筋", "按截面"],
  ["节点区箍筋", ""],
  ["箍筋肢数", "按截面"],
  ["柱类型", "(中柱)"],
];

const layers = [
  ["施工段", "土方", "基础", "主体", "二次", "装饰", "外墙", "其它", "钢筋"],
  ["轴线", "轴网", "辅助"],
  ["柱", "柱", "构造", "砌体", "约束"],
  ["墙", "剪力", "人防", "砌体", "砌体", "保温", "暗梁", "墙垛", "幕墙"],
  ["门窗洞", "门", "窗", "门联", "墙洞", "带形", "带形"],
];

const columns = [
  ["筋号", 73], ["直径(mm)", 56], ["级别", 36], ["图号", 33], ["图形", 216], ["计算公式", 166],
  ["公式描述", 61], ["弯曲调整", 38], ["长度", 68], ["根数"], ["搭接", 61], ["损耗", 31],
];

const serif = { fontFamily: "Liberation Serif, serif" };

const figures = [
  <g key="l">
    <path d="M43 15V32H212" {...s("#000")} />
    <text x="16" y="28" fontSize="14" {...serif}>150</text>
    <text x="107" y="24" fontSize="14" fill="#f00" {...serif}>4142</text>
  </g>,
  <g key="u">
    <path d="M37 36L18 17Q15 12 17 10L19 9H208Q212 10 211 14V17L193 36" {...s("#000")} />
    <text x="97" y="28" fontSize="16" {...serif}>120</text>
  </g>,
  <g key="b">
    <rect x="105" y="4" width="61" height="39" rx="1" {...s("#000")} />
    <path d="M143 15L158 4M154 24L165 11" {...s("#000")} />
    <text x="56" y="29" fontSize="20" {...serif}>120</text>
    <text x="107" y="35" fontSize="20" fill="#f00" {...serif}>320</text>
  </g>,
];

const rows = [
  { no: 4, name: "H边插筋. 2", d: 12, shape: 18, formula: "2450+1*(0.3*45*d+45*d)\n+45*d+500-50+max(6*d,150)", note: "高差+上层\n露出长…", bend: "25", len: 4267, count: 1 },
  { no: 5, name: "箍筋. 1", d: 6, shape: 485, formula: "120+2*(75+2.89*d)", note: "", bend: "(0)", len: 305, count: 13 },
  { no: 6, name: "箍筋. 2", d: 8, shape: 195, formula: "2*(320+120)+2*(12.89*d)", note: "", bend: "50", len: 1036, editing: true },
];

// left corner height of every stirrup, from the top of the column down
const stirrups = [165, 207, 250, 292, 334, 377, 419, 461, 503, 546, 578, 612, 679];

const hooks = (l, i) => {
  switch (i % 4) {
    case 0:
      return `M828 ${l - 10}V${l + 17}M834 ${l - 10}V${l + 17}`;
    case 1:
      return `M866 ${l - 40}H898M866 ${l - 35}H900`;
    case 2:
      return `M873 ${l - 54}V${l - 28}M880 ${l - 54}V${l - 28}`;
    default:
      return `M809 ${l - 3}H844M809 ${l + 2}H844`;
  }
};

const Scene = () => (
  <svg viewBox="413 175 1209 545" preserveAspectRatio="xMinYMin slice">
    <path d="M785 175H1093V524L850 720H814L785 698Z" fill="#505050" />
    <path d="M1018 175H1093V524L1046 491V387L1018 367Z" fill="#8052aa" />
    <path d="M1093 175H1207V435L1093 524Z" fill="#5a00b0" />

    <g shapeRendering="crispEdges">
      <g fill="none" stroke="#ff0">
        <path d="M413 513L785 215M785 453L551 639L664 720M1093 207L1118 187L1476 444L1131 720" />
        <path d="M1461 175L1622 291M1622 563L1426 720" />
        <path d="M785 215L835 175M785 453L1093 207" stroke="#cccc48" />
      </g>
      <path d="M517 175L413 264" stroke="#f00" />
      <path d="M833 177L1207 445" {...s("#7c7c7c", 1)} />
      <path d="M1207 445L1590 720M1546 175L863 720" {...s("#5c5c5c", 1)} />
      <path d="M1063 342L1018 378L1113 447L785 709L800 720" {...s("#4cc8cc", 1)} />
      <path d="M997 541H1030M1013 529V554" {...s("#4cc8cc", 1)} />
    </g>

    <g {...s("#8a807c", 1)} shapeRendering="crispEdges">
      {stirrups.slice(1, 11).map((l) => (
        <path key={l} d={`M840 ${l - 20}V${l - 26}L842 ${l - 28}H867V${l + 12}M840 ${l - 20}L867 ${l}`} />
      ))}
    </g>
    <g {...s("#9c918c")}>
      <path d="M810 175V686M843 175V655M865 175V675" />
      <path d="M875 175V635" strokeWidth="3" />
      <path d="M898 175V650" stroke="#77776a" />
      <path d="M774 661L809 686M807 635L835 655M865 680L901 702M846 612L875 632" />
      <path d="M898 650L933 675M833 704L855 720" stroke="#77705c" />
    </g>
    <g {...s("#4fcfd0")} strokeLinejoin="round">
      {stirrups.map((l, i) => (
        <React.Fragment key={l}>
          <path d={`M808 ${l - 2}Q806 ${l} 808 ${l + 2}L830 ${l + 17}Q833 ${l + 20} 836 ${l + 17}L901 ${l - 35}Q903 ${l - 37} 901 ${l - 39}L877 ${l - 57}Q876 ${l - 58} 874 ${l - 57}Z`} />
          <path d={hooks(l, i)} />
        </React.Fragment>
      ))}
    </g>
    <path d="M785 175V698L814 720M923 175V661L850 720M833 175V720" {...s("#fff")} />
    <path d="M785 698L876 627L923 661" {...s("#ddd")} />

    <g fill="#008200" fontSize="32" fontFamily="Noto Sans CJK SC, sans-serif">
      <text x="762" y="625">2*(320+120)+2*(12.89*d)</text>
      <text x="875" y="647">120</text>
      <text x="827" y="664">320</text>
      <text x="853" y="684">320</text>
      <text x="815" y="696">103</text>
      <text x="820" y="696">103</text>
      <text x="804" y="703">120</text>
    </g>

    <path d="M463 669L448 659" stroke="#e00" strokeWidth="4" />
    <path d="M440 654L453 657L447 666Z" fill="#e00" />
    <path d="M463 669V658" stroke="#00f" strokeWidth="4" />
    <path d="M463 648L469 660H457Z" fill="#00f" />
    <path d="M463 669L450 680" stroke="#0e0" strokeWidth="4" />
    <path d="M442 687L448 674L456 682Z" fill="#0e0" />
    <circle cx="463" cy="669" r="5" fill="#b4b4b4" />
    <g fontSize="16" fontFamily="Noto Sans CJK SC, sans-serif">
      <text x="432" y="657" fill="#f00">X</text>
      <text x="459" y="652" fill="#00f">Z</text>
      <text x="433" y="696" fill="#0f0">Y</text>
    </g>
  </svg>
);

const Chevron = ({ d }) => (
  <svg width="10" height="10" viewBox="0 0 10 10" aria-hidden="true">
    <path d={d} {...s("#aaa", 1)} />
  </svg>
);

const Top = () => (
  <>
    <TitleBar>
      <div className="inner">
        <svg width="32" height="20" viewBox="0 0 32 20">
          <path d="M4 0H10V17Q4 16 4 8Z" fill={BLUE} />
          <path d="M15 17L18 13V17Z" fill="#888" />
        </svg>
        {["select", "page", "open", "save", "undo"].map((name) => (
          <QuickButton key={name} aria-label={name}><Icon name={name} size={18} /></QuickButton>
        ))}
        <QuickButton $w={16} aria-label="redo"><Icon name="redo" size={16} /></QuickButton>
        <QuickButton $w={12} aria-label="展开"><Caret /></QuickButton>
        {["sum", "formula", "quantity", "quantity", "editBar", "bar3d", "addFrame"].map((name, i) => (
          <QuickButton key={i} $on={i === 4 || i === 5} aria-label={name}><Icon name={name} size={16} /></QuickButton>
        ))}
        <QuickButton $w={12} aria-label="自定义"><Caret /></QuickButton>
        <h1 className="title">
          广联达BIM土建计量平台 GTJ2025 - [E:\2024\11 中海神州半岛D22地块重计量\成果\模型、\终稿\底稿-1220版\1547户型底稿\模型\A1#\1547户型-A1（箍筋）.GTJ]
        </h1>
      </div>
    </TitleBar>

    <TabBar>
      {tabs.map((t) => (
        <a key={t} href="/" className={t === "工程量" ? "active" : undefined}>{t}</a>
      ))}
      <Notice>土建计量GTJ中，异形的梁/基础梁/圈梁等梁构件以及</Notice>
    </TabBar>

    <Ribbon>
      <Group $first>
        <div className="buttons">
          <BigButton><Icon name="cursor" />选择</BigButton>
          <SmallColumn $w={96}>
            <button><Icon name="pipette" size={16} />拾取构件</button>
            <button><Icon name="batch" size={16} />批量选择</button>
            <button><Icon name="byProp" size={16} />按属性选择<Caret /></button>
          </SmallColumn>
          <SmallColumn $w={78}>
            <button><Icon name="find" size={16} />查找图元</button>
            <button><Icon name="filter" size={16} />过滤图元</button>
          </SmallColumn>
        </div>
        <h2>选择</h2>
      </Group>
      {groups.map((g) => (
        <Group key={g.title}>
          <div className="buttons">
            {g.buttons.map(([icon, label, state]) => (
              <BigButton key={label} $on={state === "on"} disabled={state === "off"}>
                <Icon name={icon} />
                {label}
              </BigButton>
            ))}
          </div>
          <h2>{g.title}</h2>
        </Group>
      ))}
    </Ribbon>

    <SelectorBar>
      {["基础层", "柱", "柱", "GBZ1*"].map((v, i) => (
        <Picker key={i} className={i === 0 ? "first" : undefined}>
          <select aria-label={["楼层", "类别", "构件类型", "构件"][i]}>
            <option>{v}</option>
          </select>
          <Caret />
        </Picker>
      ))}
    </SelectorBar>
  </>
);

const Navigation = () => (
  <NavPanel>
    <PanelHead $left={2}>
      <Grip />
      <h3>导航栏</h3>
      <Close />
    </PanelHead>
    <div className="scroll">
      <div className="list">
        {nav.map((g) => (
          <React.Fragment key={g.name}>
            <NavGroup href="/" $on={g.on}>
              <Marked $dot={g.dot}>
                <svg width="24" height="24" viewBox="0 0 24 24">{navIcons[g.name]}</svg>
              </Marked>
              {g.name}
            </NavGroup>
            {(g.items || []).map((item) => (
              <NavItem key={item} href="/" $on={item === "柱(Z)"}>
                <Marked $dot={g.dots}>{item}</Marked>
              </NavItem>
            ))}
          </React.Fragment>
        ))}
      </div>
      <ScrollBar $top={12} $size={432} />
    </div>
  </NavPanel>
);

const Side = () => (
  <SideColumn>
    <ComponentPanel>
      <PanelHead>
        <Grip />
        <div className="tabs">
          <Tab $on>构件列表</Tab>
          <Tab>图纸管理</Tab>
        </div>
        <Close />
      </PanelHead>
      <ListTools>
        <span className="split">
          <button aria-label="新建"><Icon name="newDoc" size={18} /></button>
          <button className="caret" aria-label="新建选项"><Caret color="#999" /></button>
        </span>
        <button aria-label="复制"><Icon name="copy" size={18} /></button>
        <button aria-label="删除"><Icon name="trash" size={16} /></button>
        <button aria-label="层间复制"><Icon name="layers" size={18} /></button>
        <button aria-label="存档"><Icon name="saveTo" size={18} /></button>
        <button className="more" aria-label="更多"><Icon name="more" size={9} /></button>
      </ListTools>
      <SearchBox>
        <input placeholder="搜索构件..." aria-label="搜索构件" />
        <Icon name="search" size={12} />
      </SearchBox>
      <Tree>
        {components.map((c) => (
          <React.Fragment key={c.group}>
            <li><Caret color="#888" /><span className="group">{c.group}</span></li>
            {c.items.map((item) => (
              <li key={item} className="leaf">
                <span className={item.startsWith("GBZ1*") ? "selected" : undefined}>{item}</span>
              </li>
            ))}
          </React.Fragment>
        ))}
      </Tree>
    </ComponentPanel>

    <PropertyPanel>
      <PanelHead>
        <Grip />
        <div className="tabs">
          <Tab $on>属性列表</Tab>
          <Tab>图层管理</Tab>
        </div>
        <Close />
      </PanelHead>
      <div className="scroll">
        <PropertyTable>
          <colgroup><col className="name" /><col /></colgroup>
          <thead>
            <tr><th className="name">属性名称</th><th>属性值</th></tr>
          </thead>
          <tbody>
            <tr><td className="section" colSpan="2"><div><Caret color="#888" />基础属性</div></td></tr>
            {properties.map(([name, value], i) => (
              <tr key={name}>
                <PropName $plain={name === "柱类型"}><label htmlFor={`p${i}`}>{name}</label></PropName>
                <td>
                  {value === null ? (
                    <BarField id={`p${i}`}>6<Icon name="gradeHash" size={13} />12</BarField>
                  ) : (
                    <input id={`p${i}`} defaultValue={value} />
                  )}
                </td>
              </tr>
            ))}
          </tbody>
        </PropertyTable>
        <ScrollBar $top={13} $size={107} />
      </div>
    </PropertyPanel>
    <SectionButton>截面编辑</SectionButton>
  </SideColumn>
);

const Model = () => (
  <Viewport>
    <Scene />
    <DisplayPanel>
      <h3>钢筋显示控制面板</h3>
      <div>
        {["箍筋", "插筋", "上层柱插筋下插长度", "显示其它图元", "显示详细公式"].map((t) => (
          <label key={t}><input type="checkbox" defaultChecked />{t}</label>
        ))}
      </div>
    </DisplayPanel>
    <ViewTools>
      <button aria-label="动态观察"><Icon name="orbit" size={22} /></button>
      <button aria-label="二维"><Icon name="view2d" size={22} /></button>
      <button aria-label="三维"><Icon name="cube" size={22} /></button>
      <button className="caret" aria-label="视角"><Caret /></button>
      <button aria-label="实体"><Icon name="cubeFull" size={22} /></button>
      <button className="caret" aria-label="显示方式"><Caret /></button>
      <button aria-label="全屏"><Icon name="corners" size={22} /></button>
      <button aria-label="局部三维"><Icon name="isolate" size={22} /></button>
      <hr />
      <button aria-label="显示设置"><Icon name="listEye" size={22} /></button>
    </ViewTools>
    <EdgeHandle $side="left" aria-label="收起左侧"><Chevron d="M6 2L3 5L6 8" /></EdgeHandle>
    <EdgeHandle $side="right" aria-label="收起右侧"><Chevron d="M4 1L8 5L4 9" /></EdgeHandle>
    <EdgeHandle $side="bottom" aria-label="收起下方"><Chevron d="M1 3L5 7L9 3" /></EdgeHandle>
  </Viewport>
);

const RebarEditor = () => (
  <EditPanel>
    <PanelHead>
      <Grip />
      <h3>编辑钢筋</h3>
      <Close />
    </PanelHead>
    <EditTools>
      {["first", "prev", "next", "last"].map((n) => (
        <button key={n} className="step" aria-label={n}><Icon name={n} size={14} /></button>
      ))}
      <button className="move" aria-label="上移"><Icon name="up" size={16} /></button>
      <button className="move" aria-label="下移" disabled><Icon name="down" size={16} /></button>
      <button><Icon name="insert" size={16} />插入</button>
      <button><Icon name="trash" size={15} />删除</button>
      <button><Icon name="scale" size={15} />缩尺配筋</button>
      <button><Icon name="info" size={15} />钢筋信息</button>
      <button><Icon name="library" size={15} />钢筋图库</button>
      <button>其他<Caret color="#999" /></button>
      <span>单构件钢筋总重(kg)：27.884</span>
    </EditTools>
    <div className="grid">
      <div className="frame">
        <RebarTable>
          <colgroup>
            <col width="7" />
            {columns.map(([name, w]) => <col key={name} width={w} />)}
          </colgroup>
          <thead>
            <tr>
              <th />
              {columns.map(([name]) => (
                <th key={name} className={name === "根数" ? "current" : undefined}>
                  <div className={name === "弯曲调整" ? "wrapped" : undefined}>{name}</div>
                </th>
              ))}
            </tr>
          </thead>
          <tbody>
            {rows.map((r, i) => (
              <tr key={r.no}>
                <RowHead $on={r.editing}>{r.no}</RowHead>
                <td>{r.name}</td>
                <td>{r.d}</td>
                <td className="grade"><Icon name="grade" size={12} /></td>
                <td>{r.shape}</td>
                <td className="figure"><svg width="215" height="45" viewBox="0 0 215 45">{figures[i]}</svg></td>
                <td>{r.formula}</td>
                <td>{r.note}</td>
                <td>{r.bend}</td>
                <td>{r.len}</td>
                {r.editing ? (
                  <td className="editing">
                    <Editor>
                      <input defaultValue="2+Round(2400/200)+1" aria-label="根数" />
                      <span>
                        <button aria-label="展开公式">
                          <svg width="10" height="2" viewBox="0 0 10 2"><path d="M0 1H10" {...s(BLUE)} strokeDasharray="2 2" /></svg>
                        </button>
                      </span>
                    </Editor>
                  </td>
                ) : (
                  <td>{r.count}</td>
                )}
                <td>0</td>
                <td>0</td>
              </tr>
            ))}
            <tr className="empty">
              <RowHead>7</RowHead>
              {columns.map(([name]) => <td key={name} />)}
            </tr>
          </tbody>
        </RebarTable>
        <div className="gutter" />
      </div>
      <ScrollBar $top={89} $size={101} />
    </div>
    <HScroll />
  </EditPanel>
);

const Layers = () => (
  <LayerPanel>
    <PanelHead>
      <Grip />
      <h3>显示设置</h3>
    </PanelHead>
    <button className="tab">图元显示</button>
    <div className="tree">
      <div className="title">图层</div>
      <LayerRow $level={0}><button aria-label="折叠" />所有构件</LayerRow>
      {layers.map(([head, ...items]) => (
        <React.Fragment key={head}>
          <LayerRow $level={1}><i className="rail" /><button aria-label="折叠" />{head}</LayerRow>
          {items.map((item, i) => (
            <LayerRow key={i} $level={2}><i className="rail" /><i className="twig" />{item}</LayerRow>
          ))}
        </React.Fragment>
      ))}
    </div>
  </LayerPanel>
);

const Bottom = () => (
  <>
    <StatusBar>
      <div className="readings">
        <span>层高：&nbsp; 3</span>
        <span>标高：&nbsp; -3.05~-0.05</span>
        <span>选中图元：1(8)</span>
        <span>隐藏图元：0</span>
      </div>
      <StatusButton aria-label="正交"><Icon name="ortho" size={15} /></StatusButton>
      <StatusButton $wide $on aria-label="捕捉"><Icon name="snap" size={18} /><Caret /></StatusButton>
      <StatusButton aria-label="交点"><Icon name="cross" size={17} /></StatusButton>
      <StatusButton $wide aria-label="角度"><Icon name="angle" size={16} /><Caret /></StatusButton>
      <StatusButton $wide aria-label="偏移"><Icon name="plus" size={18} /><Caret /></StatusButton>
      <StatusButton aria-label="块选"><Icon name="block" size={17} /></StatusButton>
      <StatusButton aria-label="路径"><Icon name="path" size={17} /></StatusButton>
      <button className="expand" aria-label="全屏"><Icon name="expand" size={17} /></button>
      <div className="check">
        <svg width="14" height="14" viewBox="0 0 14 14">
          <circle cx="7" cy="7" r="7" fill="#f7901e" />
          <path d="M7 3V8M7 9V11" {...s("#fff")} />
        </svg>
        合法性检查存在
      </div>
    </StatusBar>
    <TaskBar>
      <Task $w={52}><TaskIcon $c="#fff" $h={14} $r={1} /></Task>
      <Task $w={42}>
        <svg width="18" height="22"><rect x="1" y="1" width="16" height="20" {...s("#fff")} /></svg>
      </Task>
      <Task $w={117}><TaskIcon $c="#f3cf6b" $h={16} /></Task>
      <Task $w={117}><TaskIcon $c="#f3cf6b" $h={16} />微信</Task>
      <Task $w={117}><TaskIcon $c="#f3cf6b" $h={16} />立即刻</Task>
      <Task $w={117}><TaskIcon $c="#e3342b" $h={12} />立即土工</Task>
      <Task $w={42}><TaskIcon $c="linear-gradient(90deg, #fdb92c 50%, #f7901e 50%)" $h={20} /></Task>
      <Task $w={116}><TaskIcon $c="radial-gradient(circle at 11px 12px, #111 6px, #fff 7px)" $h={22} /></Task>
      <Task $w={116}><TaskIcon $c="#3fd17a" $h={18} $r={9} />群微信</Task>
      <Task $w={116}><TaskIcon $c="#3fd17a" $h={18} $r={9} />微信</Task>
      <Task $w={116}><TaskIcon $c="#2a9df0" $h={20} $r={10} />立即刻</Task>
      <Task $w={118}><TaskIcon $c="linear-gradient(90deg, #fff 3px, #22b573 3px, #22b573 10px, #fff 10px, #fff 12px, #2a9df0 12px, #2a9df0 19px, #fff 19px)" $h={20} />快快控台</Task>
      <Task $w={116} $on><TaskIcon $c="#2f6bff" $h={22} />立即刻</Task>
      <Task $w={117}><TaskIcon $c="#2370b8" $h={22} />快控工</Task>
      <Task $w={140}><TaskIcon $c="#2fb6d8" $h={22} $r={11} />群小组控</Task>
      <Task $w={36}><TaskIcon $c="#2a9df0" $h={14} $r={7} /></Task>
      <Task $w={36}><TaskIcon $c="#fff" $h={14} /></Task>
      <Task $w={36}><TaskIcon $c="#ccc" $h={14} /></Task>
    </TaskBar>
  </>
);

function App() {
  return (
    <Window>
      <GlobalStyle />
      <Top />
      <Body>
        <Navigation />
        <Side />
        <Center>
          <Model />
          <RebarEditor />
          <Arrow>
            <defs>
              <linearGradient id="fade" gradientUnits="userSpaceOnUse" x1="1109" y1="502" x2="960" y2="636">
                <stop offset="0" stopColor="#f33" stopOpacity="0.25" />
                <stop offset="1" stopColor="#f33" />
              </linearGradient>
            </defs>
            <path d="M1109 501L872 711L870 708L867 717L877 714L874 713L1110 502Z" fill="url(#fade)" />
          </Arrow>
        </Center>
        <Layers />
      </Body>
      <Bottom />
    </Window>
  );
}

export default App;
